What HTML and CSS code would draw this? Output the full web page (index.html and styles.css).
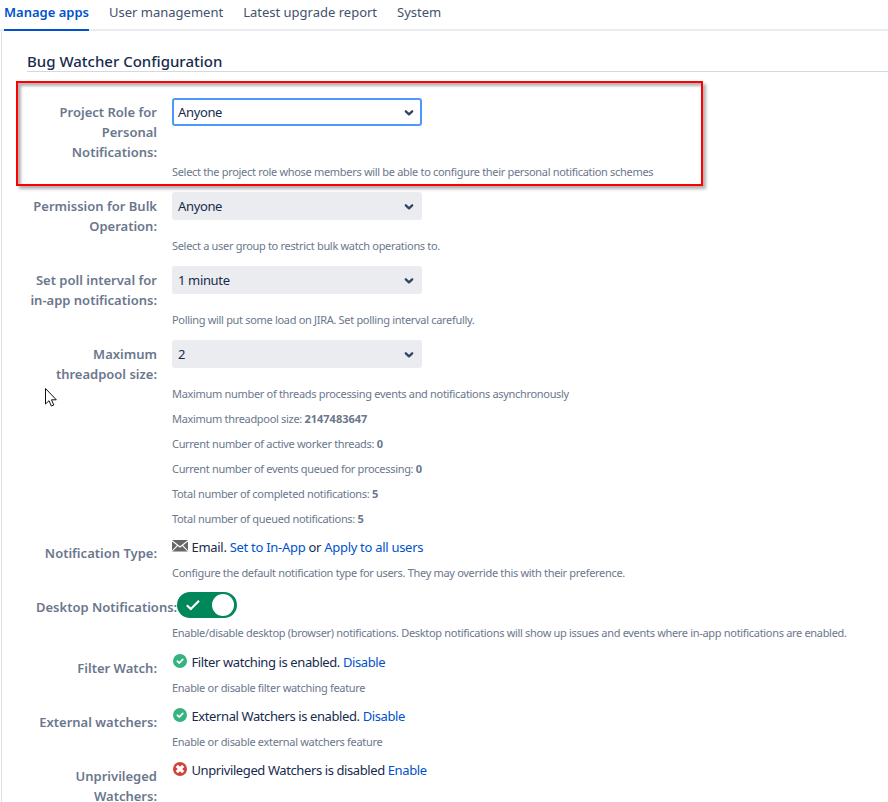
FILE: index.html
```html
<!DOCTYPE html>
<html lang="en">
<head>
<meta charset="utf-8">
<title>Bug Watcher Configuration</title>
<link rel="stylesheet" href="styles.css">
</head>
<body>
<svg class="defs" aria-hidden="true">
  <symbol id="chevron" viewBox="0 0 10 8"><path d="M1.800 2.300 5 5.300 8.200 2.300" fill="none" stroke="#344563" stroke-width="2.300" stroke-linecap="round" stroke-linejoin="round"/></symbol>
  <symbol id="ok" viewBox="0 0 14 14"><circle cx="7" cy="7" r="7" fill="#36b37e"/><path d="M4.300 7.200 6.300 9 9.800 5.300" fill="none" stroke="#fff" stroke-width="1.700" stroke-linecap="round" stroke-linejoin="round"/></symbol>
  <symbol id="off" viewBox="0 0 14 14"><circle cx="7" cy="7" r="7" fill="#d04437"/><path d="M4.900 4.900 9.100 9.100M9.100 4.900 4.900 9.100" stroke="#fff" stroke-width="3.200" stroke-linecap="square"/></symbol>
</svg>
<nav class="tabs">
  <a class="tab active">Manage apps</a>
  <a class="tab">User management</a>
  <a class="tab">Latest upgrade report</a>
  <a class="tab">System</a>
</nav>
<main class="panel">
  <h1 class="title">Bug Watcher Configuration</h1>
  <form class="form">
    <div class="row role">
      <label class="label">Project Role for Personal Notifications:</label>
      <div class="field">
        <div class="select focused"><span>Anyone</span><svg class="chevron"><use href="#chevron"/></svg></div>
        <p class="hint">Select the project role whose members will be able to configure their personal notification schemes</p>
      </div>
      <div class="highlight"></div>
    </div>
    <div class="row setting">
      <label class="label">Permission for Bulk Operation:</label>
      <div class="field">
        <div class="select"><span>Anyone</span><svg class="chevron"><use href="#chevron"/></svg></div>
        <p class="hint">Select a user group to restrict bulk watch operations to.</p>
      </div>
    </div>
    <div class="row setting">
      <label class="label">Set poll interval for in-app notifications:</label>
      <div class="field">
        <div class="select"><span>1 minute</span><svg class="chevron"><use href="#chevron"/></svg></div>
        <p class="hint">Polling will put some load on JIRA. Set polling interval carefully.</p>
      </div>
    </div>
    <div class="row pool">
      <label class="label">Maximum threadpool size:</label>
      <div class="field">
        <div class="select"><span>2</span><svg class="chevron"><use href="#chevron"/></svg></div>
        <p class="hint">Maximum number of threads processing events and notifications asynchronously</p>
        <p class="hint">Maximum threadpool size: <b>2147483647</b></p>
        <p class="hint">Current number of active worker threads: <b>0</b></p>
        <p class="hint">Current number of events queued for processing: <b>0</b></p>
        <p class="hint">Total number of completed notifications: <b>5</b></p>
        <p class="hint">Total number of queued notifications: <b>5</b></p>
      </div>
    </div>
    <div class="row state">
      <label class="label">Notification Type:</label>
      <div class="field">
        <div class="value mode"><svg class="mail" viewBox="0 0 16 12"><rect width="16" height="11.500" rx="0.800" fill="#666"/><path d="M0 .8 8 7 16 .8M.3 11 5.600 5.300M15.700 11 10.400 5.300" fill="none" stroke="#fff" stroke-width="1.100"/></svg><span>Email. <a>Set to In-App</a> or <a>Apply to all users</a></span></div>
        <p class="hint">Configure the default notification type for users. They may override this with their preference.</p>
      </div>
    </div>
    <div class="row desktop">
      <label class="label">Desktop Notifications:</label>
      <div class="field">
        <div class="toggle"><svg class="tick" viewBox="0 0 16 12"><path d="M1.800 6.200 5.800 10 14 1.800" fill="none" stroke="#fff" stroke-width="2.200"/></svg><i class="knob"></i></div>
        <p class="hint">Enable/disable desktop (browser) notifications. Desktop notifications will show up issues and events where in-app notifications are enabled.</p>
      </div>
    </div>
    <div class="row state">
      <label class="label">Filter Watch:</label>
      <div class="field">
        <div class="value"><svg class="status"><use href="#ok"/></svg><span>Filter watching is enabled. <a>Disable</a></span></div>
        <p class="hint">Enable or disable filter watching feature</p>
      </div>
    </div>
    <div class="row state">
      <label class="label">External watchers:</label>
      <div class="field">
        <div class="value"><svg class="status"><use href="#ok"/></svg><span>External Watchers is enabled. <a>Disable</a></span></div>
        <p class="hint">Enable or disable external watchers feature</p>
      </div>
    </div>
    <div class="row state">
      <label class="label">Unprivileged Watchers:</label>
      <div class="field">
        <div class="value"><svg class="status"><use href="#off"/></svg><span>Unprivileged Watchers is disabled <a>Enable</a></span></div>
      </div>
    </div>
  </form>
</main>
<svg class="cursor" viewBox="0 0 12 19"><path d="M.5.5V16L4 12.700 6.300 18 8.800 17 6.500 11.800H11.300Z" fill="#fff" stroke="#111" stroke-width="1"/></svg>
</body>
</html>
```

FILE: styles.css
```css
* { box-sizing: border-box; }
body {
  margin: 0;
  height: 802px;
  overflow: hidden;
  position: relative;
  background: #fff;
  color: #172b4d;
  font: 13px/20px "Noto Sans", "Open Sans", sans-serif;
}
.defs { position: absolute; width: 0; height: 0; }
a { color: #0052cc; text-decoration: none; }

.tabs {
  display: flex;
  gap: 20px;
  height: 31px;
  padding: 2px 0 0 4px;
  border-bottom: 2px solid #ebecf0;
}
.tab {
  height: 29px;
  white-space: nowrap;
  color: #42526e;
}
.tab.active {
  color: #0052cc;
  font-weight: 600;
  border-bottom: 2px solid #0052cc;
}

.panel {
  height: 771px;
  margin-left: 1px;
  padding: 20px 0 0 25px;
  border-left: 1px solid #dfe1e6;
}
.title {
  height: 21px;
  margin: 0;
  border-bottom: 1px solid #d5d8dc;
  font-size: 15px;
  line-height: 20px;
  font-weight: 500;
  white-space: nowrap;
}
.form { padding-top: 26px; }
.row { display: flex; gap: 15px; }
.label {
  flex: none;
  width: 130px;
  padding-top: 4px;
  text-align: right;
  color: #6b778c;
  font-weight: 600;
}
.field { flex: 1; min-width: 0; }
.hint {
  margin: 0;
  color: #6b778c;
  font-size: 11px;
  letter-spacing: -.315px;
  white-space: nowrap;
}
.hint b { letter-spacing: 0; }
.hint + .hint { margin-top: 5px; }

.role { position: relative; height: 94px; }
.role .select { margin-bottom: 36px; }
.setting { height: 74px; }
.pool { height: 197px; }
.state { height: 54px; }
.state .label { padding-top: 6px; }
.desktop { height: 61px; padding-top: 1px; }
.desktop .label { padding: 5px 0 0 9px; white-space: nowrap; text-align: left; }

.select {
  display: flex;
  align-items: center;
  justify-content: space-between;
  width: 250px;
  height: 28px;
  margin-bottom: 16px;
  padding: 0 8px 0 6px;
  border-radius: 3px;
  background: #ebecf0;
  letter-spacing: -.35px;
}
.select.focused { padding: 0 6px 0 4px; border: 2px solid #4c9aff; background: #fff; }
.chevron { width: 10px; height: 8px; margin-top: 2px; }

.highlight {
  position: absolute;
  left: -11px;
  top: -17px;
  width: 687px;
  height: 105px;
  border: 2px solid #f00;
  box-shadow: 3px 3px 3px rgba(0, 0, 0, .3), inset 3px 3px 3px rgba(0, 0, 0, .3);
}

.value { display: flex; height: 26px; white-space: nowrap; letter-spacing: -.4px; }
.value.mode { letter-spacing: -.29px; }
.mail { width: 16px; height: 12px; margin: 3px 3.5px 0 0; }
.status { width: 14px; height: 14px; margin: 2px 4.5px 0 1px; }

.toggle {
  display: flex;
  align-items: center;
  justify-content: space-between;
  width: 60px;
  height: 26px;
  margin: 0 0 5px 5px;
  padding: 0 3px 0 8px;
  border-radius: 13px;
  background: #00875a;
}
.tick { width: 16px; height: 12px; }
.knob { width: 22px; height: 22px; border-radius: 50%; background: #fff; }

.cursor { position: absolute; left: 45px; top: 388px; width: 12px; height: 19px; }
```
